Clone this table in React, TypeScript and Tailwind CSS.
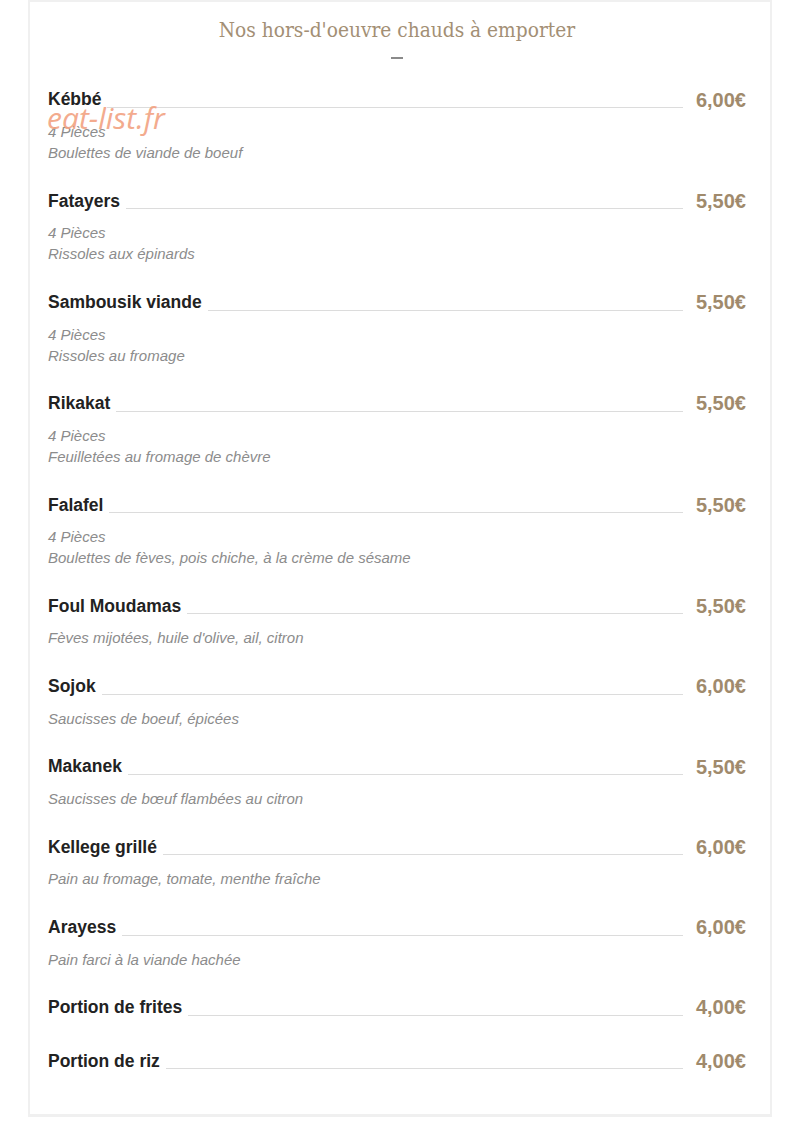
const items: { name: string; price: string; desc: string[] }[] = [
  { name: "Kébbé", price: "6,00€", desc: ["4 Pièces", "Boulettes de viande de boeuf"] },
  { name: "Fatayers", price: "5,50€", desc: ["4 Pièces", "Rissoles aux épinards"] },
  { name: "Sambousik viande", price: "5,50€", desc: ["4 Pièces", "Rissoles au fromage"] },
  { name: "Rikakat", price: "5,50€", desc: ["4 Pièces", "Feuilletées au fromage de chèvre"] },
  { name: "Falafel", price: "5,50€", desc: ["4 Pièces", "Boulettes de fèves, pois chiche, à la crème de sésame"] },
  { name: "Foul Moudamas", price: "5,50€", desc: ["Fèves mijotées, huile d'olive, ail, citron"] },
  { name: "Sojok", price: "6,00€", desc: ["Saucisses de boeuf, épicées"] },
  { name: "Makanek", price: "5,50€", desc: ["Saucisses de bœuf flambées au citron"] },
  { name: "Kellege grillé", price: "6,00€", desc: ["Pain au fromage, tomate, menthe fraîche"] },
  { name: "Arayess", price: "6,00€", desc: ["Pain farci à la viande hachée"] },
  { name: "Portion de frites", price: "4,00€", desc: [] },
  { name: "Portion de riz", price: "4,00€", desc: [] },
];

const MenuItem = ({ item }: { item: (typeof items)[number] }) => (
  <div className="pb-[22.3px]">
    <div className="flex h-[31px] items-center">
      <span className="text-[17.5px] font-bold text-[#222] [font-family:'Liberation_Sans',Arial,sans-serif]">
        {item.name}
      </span>
      <div className="ml-[6px] mr-[13px] mt-[16px] h-px flex-1 bg-[#dcdcdc]" />
      <span className="text-[20px] font-bold text-[#a08a6c] [font-family:'Liberation_Sans',Arial,sans-serif]">
        {item.price}
      </span>
    </div>
    {item.desc.length > 0 && (
      <div className="mt-[6px]">
        {item.desc.map((d) => (
          <p
            key={d}
            className="h-[21px] text-[15px] leading-[21px] italic text-[#8c8c8c] [font-family:'Liberation_Sans',Arial,sans-serif]"
          >
            {d}
          </p>
        ))}
      </div>
    )}
  </div>
);

export default function App() {
  return (
    <div className="min-h-[1144px] w-[807px] bg-white pl-[28px]">
      <div className="relative w-[744px] border-x-2 border-b-[3px] border-t-2 border-[#f0f0f0] pb-[15px] pl-[18px] pr-[24px]">
        <div className="pt-[13px] text-center">
          <h1 className="text-[20.7px] leading-[30px] text-[#a38f75] [font-family:'DejaVu_Serif_Condensed','Liberation_Serif',serif]">
            Nos hors-d'oeuvre chauds à emporter
          </h1>
          <div className="mx-auto mt-[12px] h-[2px] w-[12px] bg-[#8a8a8a]" />
        </div>
        <div className="mt-[25px]">
          {items.map((item) => (
            <MenuItem key={item.name} item={item} />
          ))}
        </div>
        <span className="absolute left-[17px] top-[98px] text-[30px] leading-[36px] italic text-[#f2a282] opacity-90 [font-family:'Open_Sans',sans-serif]">
          eat-list.fr
        </span>
      </div>
    </div>
  );
}
